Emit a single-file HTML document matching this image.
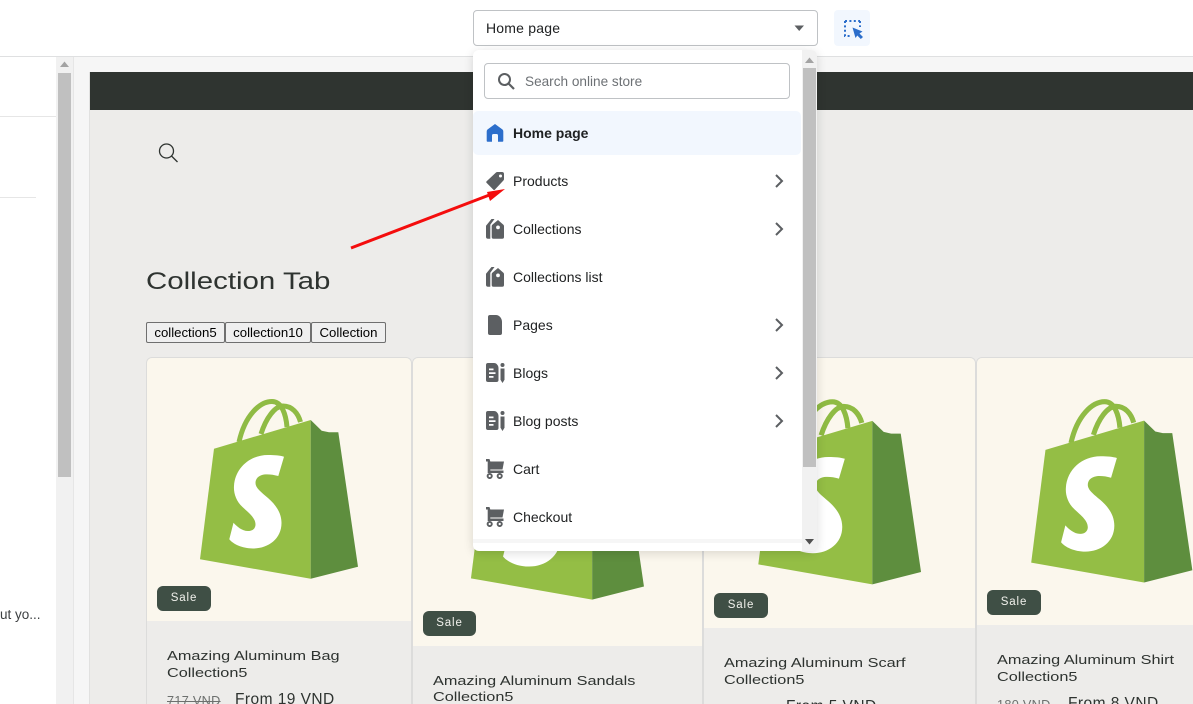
<!DOCTYPE html>
<html><head><meta charset="utf-8"><title>Home page</title>
<style>
html,body{margin:0;padding:0;width:1193px;height:704px;overflow:hidden;background:#f6f6f6;font-family:"Liberation Sans",sans-serif;}
#root{position:relative;width:1193px;height:704px;overflow:hidden;}
.a{position:absolute;}
.t{position:absolute;white-space:nowrap;}
.card{position:absolute;top:357px;height:360px;background:#edecea;border:1px solid #dcdcdb;border-width:1px 1px 0 1px;border-radius:6px 6px 0 0;box-sizing:border-box;}
.img{position:absolute;left:0;right:0;top:0;background:#fbf7ed;border-radius:5px 5px 0 0;}
.sale{position:absolute;width:54px;height:25px;background:#3f4f45;border-radius:6px;color:#f1f1ec;font-size:11.5px;letter-spacing:.9px;text-align:center;line-height:24px;}
.ti{position:absolute;white-space:nowrap;font-size:12.5px;line-height:17px;color:#2e3330;transform-origin:0 0;transform:scaleX(1.3);}
.pr{position:absolute;white-space:nowrap;font-size:15.5px;color:#2e3330;letter-spacing:.45px;}
.old{position:absolute;white-space:nowrap;font-size:12.7px;color:#6d706e;text-decoration:line-through;letter-spacing:.3px;}
.tab{position:absolute;top:322px;height:21px;box-sizing:border-box;border:1px solid #6f6f6f;border-radius:2px;background:#efefef;color:#000;font-size:13.2px;line-height:19px;text-align:center;}
.row{position:absolute;left:40px;font-size:14px;color:#202223;white-space:nowrap;line-height:20px;}
.ic{position:absolute;left:12px;width:20px;height:20px;}
.ch{position:absolute;left:298px;width:16px;height:16px;}
.bag{position:absolute;}
</style></head><body><div id="root">

<svg width="0" height="0" style="position:absolute"><defs>
<symbol id="bag" viewBox="0 0 180 200">
<path d="M49,52C55,25 70,11.500 82,11.500C92,11.500 96,25 97,37" fill="none" stroke="#8fbb44" stroke-width="5"/>
<path d="M71,44C76,28 85,16 93,16C102,16 108,23 110.500,32" fill="none" stroke="#8fbb44" stroke-width="5"/>
<path d="M10,169.300L120.700,188.700L120.700,30L24,58.700Z" fill="#94be45"/>
<path d="M120.700,30L131.700,40.700L139,42.300H148.300L168,176.700L120.700,188.700Z" fill="#5e8e3e"/>
<path d="M94,66.700L88.300,86C83,84.500 78,84 74,84.500C68,85.500 65.500,89 65.500,93C65.500,98 71,102 78,108C86,115 91.500,123 91.500,133C91.500,149 78,158.500 63,158.500C52,158.500 43,154 39.300,149.300L43.500,132.700C47,136.500 52,141 58,141C63,141 65.500,138 65.500,134.500C65.500,128 59,123 52.500,117C46,111 43.500,103 44,96C45,78 60,65 78,65C85,65 90,65.500 94,66.700Z" fill="#fff"/>
</symbol>
<symbol id="i-col" viewBox="0 0 20 20">
<path fill-rule="evenodd" d="M13,1L18.400,5.800A2,2 0 0 1 19,7.300V18A1.800,1.800 0 0 1 17.200,19.800H8.500A1.800,1.800 0 0 1 6.700,18V7.300A2,2 0 0 1 7.300,5.800ZM13,6.500A1.900,1.900 0 1 0 13,10.300A1.900,1.900 0 1 0 13,6.500Z" fill="#5c5f62"/>
<path d="M6.500,0H9.500L5.300,5.800V19.800H3A2,2 0 0 1 1,17.800V6.800Z" fill="#5c5f62"/>
</symbol>
<symbol id="i-blog" viewBox="0 0 20 20">
<path fill-rule="evenodd" d="M1,2A2,2 0 0 1 3,0H9C11.500,0 13.500,2.500 13.500,5V17A2,2 0 0 1 11.500,19H3A2,2 0 0 1 1,17ZM4,5.500V7.300H8.500V5.500ZM4,9.300V11H10.500V9.300ZM4,13V14.800H8.500V13Z" fill="#5c5f62"/>
<circle cx="17.500" cy="2" r="2" fill="#5c5f62"/>
<path d="M15.500,5.500H19.500V16.800L17.500,20L15.500,16.800Z" fill="#5c5f62"/>
</symbol>
<symbol id="i-cart" viewBox="0 0 20 20">
<path d="M1,0H4.500L5.300,2.500H19L17.500,10.500H5.300V11.500H18.500V14H2.700V2.500H1Z" fill="#5c5f62"/>
<circle cx="4.700" cy="17" r="2.100" fill="none" stroke="#5c5f62" stroke-width="1.900"/>
<circle cx="14.700" cy="17" r="2.100" fill="none" stroke="#5c5f62" stroke-width="1.900"/>
</symbol>
<symbol id="i-ch" viewBox="0 0 16 16">
<path d="M5,2L11,8L5,14" fill="none" stroke="#5c5f62" stroke-width="2"/>
</symbol>
</defs></svg>

<!-- left panel -->
<div class="a" style="left:0;top:57px;width:56px;height:647px;background:#fff"></div>
<div class="a" style="left:0;top:116px;width:56px;height:1px;background:#e6e6e6"></div>
<div class="a" style="left:0;top:197px;width:36px;height:1px;background:#e6e6e6"></div>
<div class="t" style="left:0;top:607px;font-size:13.5px;line-height:16px;color:#3c3f41">ut yo...</div>
<div class="a" style="left:56px;top:57px;width:18px;height:647px;background:#f1f1f1;border-right:1px solid #e6e6e6;box-sizing:border-box"></div>
<div class="a" style="left:58px;top:73px;width:13px;height:404px;background:#c0c0c0"></div>
<svg class="a" style="left:60px;top:61px" width="9" height="6"><path d="M0,6L4.500,0.500L9,6Z" fill="#a3a3a3"/></svg>

<!-- store page -->
<div class="a" style="left:89px;top:72px;width:1104px;height:632px;background:#edecea;border-left:1px solid #e1e1e0;box-sizing:border-box"></div>
<div class="a" style="left:90px;top:72px;width:1103px;height:38px;background:#2f3430"></div>
<svg class="a" style="left:156px;top:141px" width="24" height="24"><circle cx="10.500" cy="10" r="7" fill="none" stroke="#2e3330" stroke-width="1.300"/><path d="M15.500,15L21.500,21" stroke="#2e3330" stroke-width="1.300"/></svg>
<div class="t" style="left:146px;top:268px;font-size:24px;line-height:28px;color:#2e3330;transform-origin:0 0;transform:scaleX(1.227)">Collection Tab</div>

<div class="tab" style="left:146px;width:79px">collection5</div>
<div class="tab" style="left:225px;width:86px">collection10</div>
<div class="tab" style="left:311px;width:75px">Collection</div>

<!-- cards -->
<div class="card" style="left:146px;width:266px"><div class="img" style="height:263px"></div></div>
<div class="card" style="left:412px;width:291px"><div class="img" style="height:288px"></div></div>
<div class="card" style="left:703px;width:273px"><div class="img" style="height:270px"></div></div>
<div class="card" style="left:976px;width:240px"><div class="img" style="height:267px"></div></div>

<svg class="bag" style="left:190px;top:390px" width="180" height="200"><use href="#bag"/></svg>
<svg class="bag" style="left:460px;top:392.700px" width="197.100" height="219"><use href="#bag"/></svg>
<svg class="bag" style="left:747.700px;top:389.600px" width="185.400" height="206"><use href="#bag"/></svg>
<svg class="bag" style="left:1020.500px;top:389.500px" width="183.600" height="204"><use href="#bag"/></svg>

<div class="sale" style="left:157px;top:586px">Sale</div>
<div class="sale" style="left:423px;top:611px;width:53px">Sale</div>
<div class="sale" style="left:714px;top:593px">Sale</div>
<div class="sale" style="left:987px;top:590px">Sale</div>

<div class="ti" style="left:167px;top:648px">Amazing Aluminum Bag</div>
<div class="ti" style="left:167px;top:665px">Collection5</div>
<div class="old" style="left:167px;top:694px">717 VND</div>
<div class="pr" style="left:235px;top:691px">From 19 VND</div>

<div class="ti" style="left:433px;top:673px">Amazing Aluminum Sandals</div>
<div class="ti" style="left:433px;top:689px">Collection5</div>

<div class="ti" style="left:724px;top:655px">Amazing Aluminum Scarf</div>
<div class="ti" style="left:724px;top:672px">Collection5</div>
<div class="pr" style="left:786px;top:698px">From 5 VND</div>

<div class="ti" style="left:997px;top:652px">Amazing Aluminum Shirt</div>
<div class="ti" style="left:997px;top:669px">Collection5</div>
<div class="old" style="left:997px;top:698px">180 VND</div>
<div class="pr" style="left:1068px;top:695px">From 8 VND</div>

<!-- top bar -->
<div class="a" style="left:0;top:0;width:1193px;height:57px;background:#fff;border-bottom:1px solid #dfe0e1;box-sizing:border-box"></div>
<div class="a" style="left:473px;top:10px;width:345px;height:36px;background:#fff;border:1px solid #bfc2c5;border-radius:4px;box-sizing:border-box"></div>
<div class="t" style="left:486px;top:18px;font-size:14px;line-height:20px;color:#202223;letter-spacing:.2px">Home page</div>
<svg class="a" style="left:794px;top:25px" width="11" height="7"><path d="M0.500,0.500H10L5.200,6Z" fill="#5c5f62"/></svg>
<div class="a" style="left:834px;top:10px;width:36px;height:36px;background:#f2f7fe;border-radius:4px"></div>
<svg class="a" style="left:842px;top:18px" width="22" height="22">
<path d="M3,3H18M3,3V18H9M18,3V9" fill="none" stroke="#2c6ecb" stroke-width="2" stroke-dasharray="2 2.400"/>
<path d="M10.500,9.500L20.500,13.500L17.500,15.500L21,19L18.800,21L15.300,17.500L13.500,20Z" fill="#2c6ecb"/>
</svg>

<!-- dropdown -->
<div class="a" style="left:473px;top:50px;width:344px;height:501px;background:#fff;border-radius:6px;box-shadow:0 2px 10px rgba(0,0,0,.14);overflow:hidden">
  <div class="a" style="left:329px;top:0;width:15px;height:501px;background:#f1f1f1"></div>
  <div class="a" style="left:330px;top:18px;width:13px;height:399px;background:#c0c0c0"></div>
  <svg class="a" style="left:332px;top:7px" width="9" height="6"><path d="M0,6L4.500,0.500L9,6Z" fill="#a3a3a3"/></svg>
  <svg class="a" style="left:332px;top:489px" width="9" height="6"><path d="M0,0H9L4.500,5.500Z" fill="#505050"/></svg>

  <div class="a" style="left:11px;top:13px;width:306px;height:36px;border:1px solid #bfc2c5;border-radius:4px;box-sizing:border-box;background:#fff"></div>
  <svg class="a" style="left:23px;top:21px" width="20" height="20"><circle cx="8.500" cy="8.500" r="5.500" fill="none" stroke="#5c5f62" stroke-width="2"/><path d="M12.500,12.500L18,18" stroke="#5c5f62" stroke-width="2.200"/></svg>
  <div class="t" style="left:52px;top:22px;font-size:13.6px;line-height:20px;color:#6d7175">Search online store</div>

  <div class="a" style="left:0;top:61px;width:328px;height:44px;background:#f2f7fe;border-radius:5px"></div>

  <svg class="ic" style="top:73px" viewBox="0 0 20 20"><path d="M10,1L17.500,6.500Q18.300,7.200 18.300,8.500V18Q18.300,18.700 17.500,18.700H13V12.500A1.500,1.500 0 0 0 11.500,11H8.500A1.500,1.500 0 0 0 7,12.500V18.700H2.500Q1.700,18.700 1.700,18V8.500Q1.700,7.200 2.500,6.500Z" fill="#2c6ecb"/></svg>
  <div class="row" style="top:73px;font-weight:bold">Home page</div>

  <svg class="ic" style="top:121px" viewBox="0 0 20 20"><path fill-rule="evenodd" d="M11,1.500A2,2 0 0 1 12.300,1H17A2,2 0 0 1 19,3V8A2,2 0 0 1 18.400,9.500L9.800,18.700A1,1 0 0 1 8.400,18.700L1.500,11.800A1,1 0 0 1 1.500,10.400ZM15.500,3.500A1.500,1.500 0 1 0 15.500,6.500A1.500,1.500 0 1 0 15.500,3.500Z" fill="#5c5f62"/></svg>
  <div class="row" style="top:121px">Products</div>
  <svg class="ch" style="top:123px"><use href="#i-ch"/></svg>

  <svg class="ic" style="top:169px"><use href="#i-col"/></svg>
  <div class="row" style="top:169px">Collections</div>
  <svg class="ch" style="top:171px"><use href="#i-ch"/></svg>

  <svg class="ic" style="top:217px"><use href="#i-col"/></svg>
  <div class="row" style="top:217px">Collections list</div>

  <svg class="ic" style="top:265px" viewBox="0 0 20 20"><path d="M3,2A2,2 0 0 1 5,0H11C14,0 17,3 17,7V18A2,2 0 0 1 15,20H5A2,2 0 0 1 3,18Z" fill="#5c5f62"/></svg>
  <div class="row" style="top:265px">Pages</div>
  <svg class="ch" style="top:267px"><use href="#i-ch"/></svg>

  <svg class="ic" style="top:313px"><use href="#i-blog"/></svg>
  <div class="row" style="top:313px">Blogs</div>
  <svg class="ch" style="top:315px"><use href="#i-ch"/></svg>

  <svg class="ic" style="top:361px"><use href="#i-blog"/></svg>
  <div class="row" style="top:361px">Blog posts</div>
  <svg class="ch" style="top:363px"><use href="#i-ch"/></svg>

  <svg class="ic" style="top:409px"><use href="#i-cart"/></svg>
  <div class="row" style="top:409px">Cart</div>

  <svg class="ic" style="top:457px"><use href="#i-cart"/></svg>
  <div class="row" style="top:457px">Checkout</div>

  <div class="a" style="left:0;top:489px;width:329px;height:4px;background:#f6f6f6"></div>
</div>

<!-- red arrow -->
<svg class="a" style="left:340px;top:170px" width="180" height="90">
<path d="M11,78L152,24" stroke="#f40d0d" stroke-width="3"/>
<path d="M165,19L147,22L150,31Z" fill="#f40d0d"/>
</svg>

</div></body></html>
